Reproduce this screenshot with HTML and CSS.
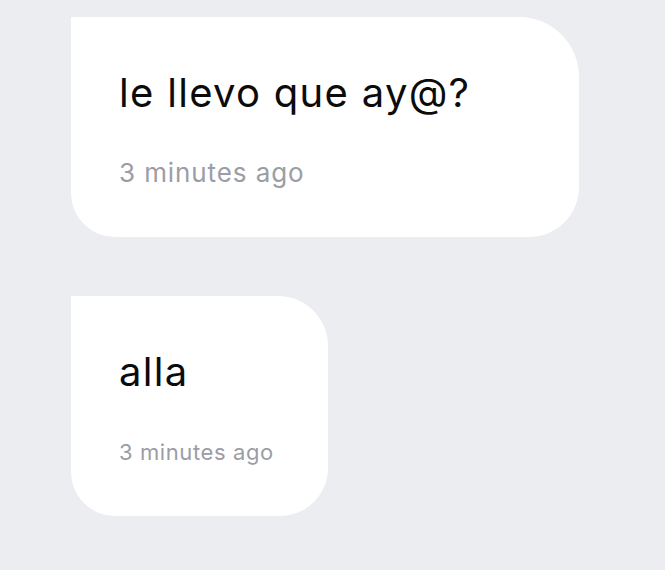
FILE: index.html
```html
<!DOCTYPE html>
<html>
<head>
<meta charset="utf-8">
<link rel="stylesheet" href="styles.css">
</head>
<body>
<div class="chat">
  <div class="bubble bubble-wide">
    <div class="msg msg-large">le llevo que ay@?</div>
    <div class="time time-large">3 minutes ago</div>
  </div>
  <div class="bubble bubble-narrow">
    <div class="msg msg-large">alla</div>
    <div class="time time-small">3 minutes ago</div>
  </div>
</div>
</body>
</html>
```
FILE: styles.css
```css
html, body {
  margin: 0;
  padding: 0;
  background: #ecedf1;
  font-family: Inter, "Noto Sans", sans-serif;
}
.chat {
  display: flex;
  flex-direction: column;
  align-items: flex-start;
  gap: 59px;
  padding: 17px 0 0 71px;
}
.bubble {
  background: #ffffff;
  box-sizing: border-box;
  height: 220px;
  padding: 50px 0 0 48px;
  display: flex;
  flex-direction: column;
}
.bubble-wide {
  width: 508px;
  border-radius: 0 60px 50px 44px;
}
.bubble-narrow {
  width: 257px;
  border-radius: 0 50px 48px 44px;
}
.msg {
  color: #0b0b0c;
  font-size: 40px;
  line-height: 52px;
  letter-spacing: 1.3px;
}
.time {
  color: #9b9da6;
  margin-top: 37px;
}
.time-large {
  font-size: 26px;
  line-height: 34px;
  letter-spacing: 0.9px;
}
.time-small {
  font-size: 22px;
  line-height: 34px;
  letter-spacing: 0.6px;
}
```
